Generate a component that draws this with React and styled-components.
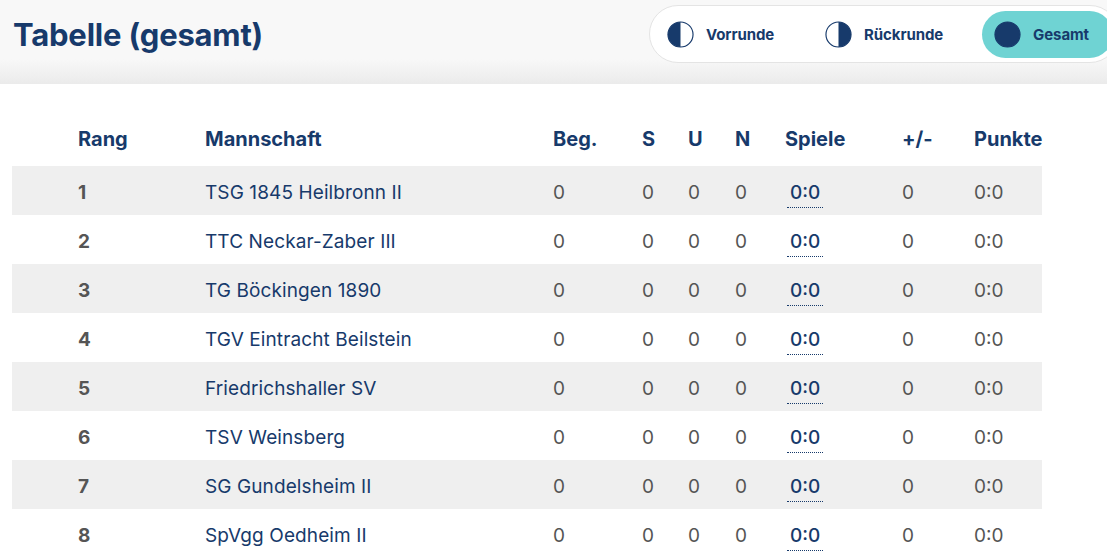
import React from "react"
import styled, { createGlobalStyle } from "styled-components"

const GlobalStyle = createGlobalStyle`
  html, body {
    margin: 0;
    padding: 0;
    background: #ffffff;
    overflow-x: hidden;
    font-family: Inter, "Open Sans", Arial, sans-serif;
  }
`

const NAVY = "#173a6b"

const teams = [
  "TSG 1845 Heilbronn II",
  "TTC Neckar-Zaber III",
  "TG Böckingen 1890",
  "TGV Eintracht Beilstein",
  "Friedrichshaller SV",
  "TSV Weinsberg",
  "SG Gundelsheim II",
  "SpVgg Oedheim II",
]

const columns = "127px 348px 89px 46px 47px 50px 117px 72px 1fr"

const Header = styled.header`
  height: 84px;
  background: linear-gradient(to bottom, #f8f8f8 0, #f8f8f8 70%, #ebebeb 100%);
  display: flex;
  justify-content: space-between;
  align-items: flex-start;
  padding-left: 13px;
`

const Title = styled.h1`
  margin: 0;
  padding-top: 16px;
  font-size: 31px;
  font-weight: 700;
  color: ${NAVY};
  letter-spacing: -0.2px;
`

const Toggle = styled.div`
  margin-top: 5px;
  margin-right: -12px;
  height: 46px;
  padding: 5px;
  display: flex;
  gap: 15px;
  background: #ffffff;
  border: 1px solid #e4e4e4;
  border-radius: 30px;
`

const ToggleButton = styled.button`
  display: flex;
  align-items: center;
  gap: 12px;
  height: 47px;
  padding: 0 24px 0 12px;
  border: none;
  border-radius: 24px;
  background: ${(p) => (p.$active ? "#6fd3d3" : "transparent")};
  color: ${NAVY};
  font-family: inherit;
  font-size: 15px;
  font-weight: 700;
  letter-spacing: -0.1px;
  cursor: pointer;
`

const Table = styled.div`
  margin: 31px 0 0 12px;
  width: 1030px;
`

const Row = styled.div`
  display: grid;
  grid-template-columns: ${columns};
  align-items: center;
  height: ${(p) => (p.$head ? "51px" : "49px")};
  padding-left: 66px;
  padding-top: ${(p) => (p.$head ? "0" : "3px")};
  padding-bottom: ${(p) => (p.$head ? "4px" : "0")};
  box-sizing: border-box;
  background: ${(p) => (p.$striped ? "#efefef" : "#ffffff")};
`

const HeadCell = styled.div`
  font-size: 20px;
  font-weight: 700;
  color: ${NAVY};
`

const Cell = styled.div`
  font-size: 19px;
  font-weight: ${(p) => (p.$bold ? 700 : 400)};
  color: ${(p) => (p.$navy ? NAVY : "#555555")};
  letter-spacing: ${(p) => (p.$navy ? "0.1px" : "0")};
`

const Games = styled.span`
  display: inline-block;
  margin: 0 0 -5px 2px;
  padding: 0 3px 3px;
  font-size: 19px;
  font-weight: 500;
  color: ${NAVY};
  border-bottom: 1.5px dotted ${NAVY};
`

const HalfIcon = ({ side }) => (
  <svg width="27" height="27" viewBox="0 0 28 28">
    <circle cx="14" cy="14" r="13" fill={side === "full" ? NAVY : "#fff"} stroke={NAVY} strokeWidth="1.2" />
    {side === "left" && <path d="M14 1 A13 13 0 0 0 14 27 Z" fill={NAVY} />}
    {side === "right" && <path d="M14 1 A13 13 0 0 1 14 27 Z" fill={NAVY} />}
  </svg>
)

const headers = ["Rang", "Mannschaft", "Beg.", "S", "U", "N", "Spiele", "+/-", "Punkte"]

const App = () => {
  return (
    <>
      <GlobalStyle />
      <Header>
        <Title>Tabelle (gesamt)</Title>
        <Toggle>
          <ToggleButton>
            <HalfIcon side="left" />
            Vorrunde
          </ToggleButton>
          <ToggleButton>
            <HalfIcon side="right" />
            Rückrunde
          </ToggleButton>
          <ToggleButton $active>
            <HalfIcon side="full" />
            Gesamt
          </ToggleButton>
        </Toggle>
      </Header>
      <Table>
        <Row $head>
          {headers.map((h) => (
            <HeadCell key={h}>{h}</HeadCell>
          ))}
        </Row>
        {teams.map((team, i) => (
          <Row key={team} $striped={i % 2 === 0}>
            <Cell $bold>{i + 1}</Cell>
            <Cell $navy>{team}</Cell>
            <Cell>0</Cell>
            <Cell>0</Cell>
            <Cell>0</Cell>
            <Cell>0</Cell>
            <Cell>
              <Games>0:0</Games>
            </Cell>
            <Cell>0</Cell>
            <Cell>0:0</Cell>
          </Row>
        ))}
      </Table>
    </>
  )
}

export default App
